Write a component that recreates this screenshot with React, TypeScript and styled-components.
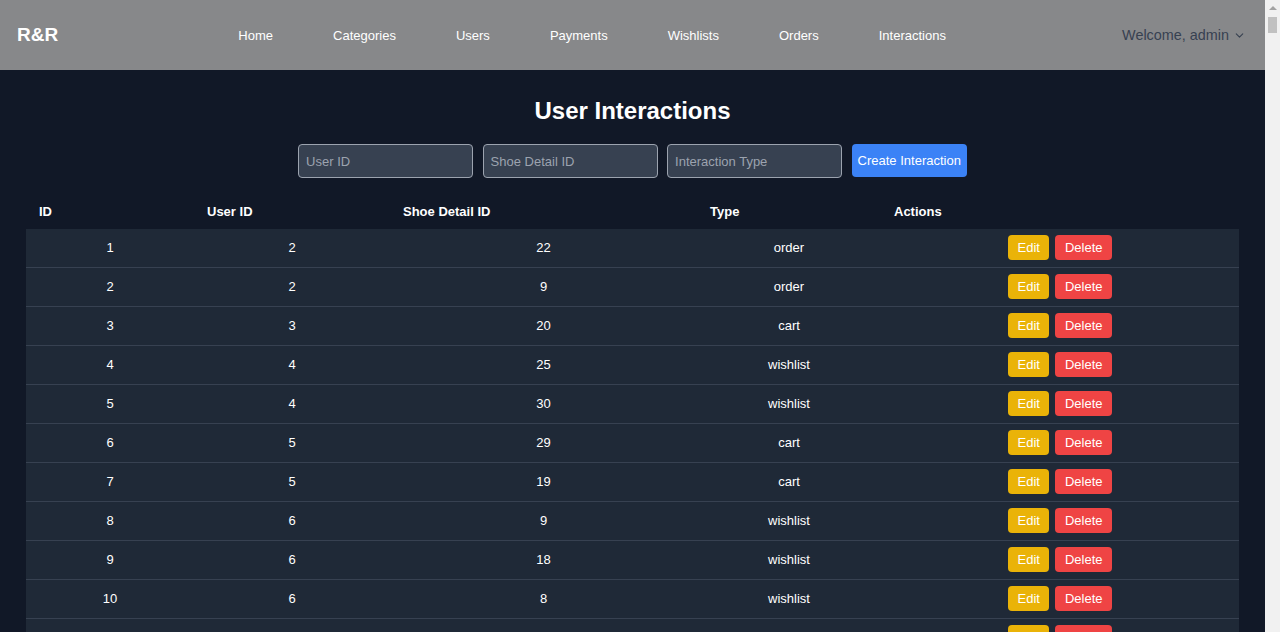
import React from "react";
import styled, { createGlobalStyle } from "styled-components";
import { ChevronDown } from "lucide-react";

type InteractionProps = {
  id: number;
  user_id: number;
  shoe_detail_id: number;
  type: string;
};

const data: InteractionProps[] = [
  { id: 1, user_id: 2, shoe_detail_id: 22, type: "order" },
  { id: 2, user_id: 2, shoe_detail_id: 9, type: "order" },
  { id: 3, user_id: 3, shoe_detail_id: 20, type: "cart" },
  { id: 4, user_id: 4, shoe_detail_id: 25, type: "wishlist" },
  { id: 5, user_id: 4, shoe_detail_id: 30, type: "wishlist" },
  { id: 6, user_id: 5, shoe_detail_id: 29, type: "cart" },
  { id: 7, user_id: 5, shoe_detail_id: 19, type: "cart" },
  { id: 8, user_id: 6, shoe_detail_id: 9, type: "wishlist" },
  { id: 9, user_id: 6, shoe_detail_id: 18, type: "wishlist" },
  { id: 10, user_id: 6, shoe_detail_id: 8, type: "wishlist" },
  { id: 11, user_id: 7, shoe_detail_id: 14, type: "order" },
  { id: 12, user_id: 7, shoe_detail_id: 3, type: "cart" },
  { id: 13, user_id: 8, shoe_detail_id: 27, type: "wishlist" },
  { id: 14, user_id: 8, shoe_detail_id: 11, type: "order" },
];

const NAV_LINKS = [
  "Home",
  "Categories",
  "Users",
  "Payments",
  "Wishlists",
  "Orders",
  "Interactions",
];

const GlobalStyle = createGlobalStyle`
  body {
    margin: 0;
    background: #111827;
    font-family: "Liberation Sans", Arial, sans-serif;
    color: #ffffff;
  }
`;

const Page = styled.div`
  margin-right: 15px;
`;

// stand-in for the browser scrollbar shown in the screenshot
const ScrollTrack = styled.div`
  position: fixed;
  top: 0;
  right: 0;
  bottom: 0;
  width: 15px;
  background: #f1f1f1;
  display: flex;
  flex-direction: column;
  align-items: center;
`;

const ScrollArrow = styled.div`
  width: 0;
  height: 0;
  margin: 6px 0 4px;
  border-left: 4px solid transparent;
  border-right: 4px solid transparent;
  border-bottom: 4px solid #a3a3a3;
`;

const ScrollThumb = styled.div`
  width: 9px;
  height: 16px;
  background: #c1c1c1;
  margin-top: 3px;
`;

const Header = styled.header`
  height: 70px;
  background: #87888a;
  display: flex;
  align-items: center;
  justify-content: space-between;
  padding: 0 19px 0 17px;
`;

const Logo = styled.div`
  font-size: 19px;
  font-weight: bold;
  color: #ffffff;
`;

const Nav = styled.nav`
  display: flex;
  gap: 60px;
  margin-left: 4px;
`;

const NavLink = styled.a`
  font-size: 13px;
  color: #ffffff;
  text-decoration: none;
  cursor: pointer;
`;

const Welcome = styled.div`
  display: flex;
  align-items: center;
  gap: 4px;
  font-size: 14.4px;
  color: #374151;
`;

const Main = styled.main`
  padding: 26px 26px 0;
`;

const Title = styled.h1`
  margin: 0;
  font-size: 24px;
  line-height: 29px;
  font-weight: bold;
  text-align: center;
`;

const Form = styled.div`
  display: flex;
  justify-content: center;
  gap: 9.5px;
  margin-top: 19px;
`;

const Input = styled.input`
  width: 175px;
  height: 34px;
  box-sizing: border-box;
  background: #374151;
  border: 1px solid #9ca3af;
  border-radius: 4px;
  padding: 0 7px;
  font-family: inherit;
  font-size: 13px;
  color: #ffffff;
  outline: none;

  &::placeholder {
    color: #9ca3af;
  }
`;

const CreateButton = styled.button`
  height: 33px;
  padding: 0 6px;
  background: #3b82f6;
  border: none;
  border-radius: 4px;
  color: #ffffff;
  font-family: inherit;
  font-size: 13px;
  cursor: pointer;
`;

const Table = styled.table`
  width: 100%;
  margin-top: 16px;
  border-collapse: collapse;
  table-layout: fixed;
  font-size: 13px;
`;

const Th = styled.th<{ $width: number }>`
  width: ${(p) => p.$width}px;
  box-sizing: border-box;
  text-align: left;
  font-weight: bold;
  padding: 8.5px 13px 9.5px;
  line-height: 17px;
`;

const Tr = styled.tr`
  background: #1f2937;
  border-bottom: 1px solid #374151;
`;

const Td = styled.td`
  text-align: center;
  padding: 6px 9px 7px;
  line-height: 17px;
`;

const ActionButton = styled.button<{ $variant: "edit" | "delete" }>`
  background: ${(p) => (p.$variant === "edit" ? "#eab308" : "#ef4444")};
  border: none;
  border-radius: 4px;
  color: #ffffff;
  font-family: inherit;
  font-size: 13px;
  line-height: 17px;
  padding: 4px 9.5px;
  margin: 0 3px;
  cursor: pointer;
`;

const COLUMNS = [
  { label: "ID", width: 168 },
  { label: "User ID", width: 196 },
  { label: "Shoe Detail ID", width: 307 },
  { label: "Type", width: 184 },
  { label: "Actions", width: 358 },
];

function App() {
  const [interactions] = React.useState<InteractionProps[]>(data);

  return (
    <>
      <GlobalStyle />
      <Page>
        <Header>
          <Logo>R&amp;R</Logo>
          <Nav>
            {NAV_LINKS.map((link) => (
              <NavLink key={link}>{link}</NavLink>
            ))}
          </Nav>
          <Welcome>
            Welcome, admin
            <ChevronDown size={13} strokeWidth={2} />
          </Welcome>
        </Header>
        <Main>
          <Title>User Interactions</Title>
          <Form>
            <Input placeholder="User ID" />
            <Input placeholder="Shoe Detail ID" />
            <Input placeholder="Interaction Type" />
            <CreateButton>Create Interaction</CreateButton>
          </Form>
          <Table>
            <thead>
              <tr>
                {COLUMNS.map((col) => (
                  <Th key={col.label} $width={col.width}>
                    {col.label}
                  </Th>
                ))}
              </tr>
            </thead>
            <tbody>
              {interactions.map((item) => (
                <Tr key={item.id}>
                  <Td>{item.id}</Td>
                  <Td>{item.user_id}</Td>
                  <Td>{item.shoe_detail_id}</Td>
                  <Td>{item.type}</Td>
                  <Td>
                    <ActionButton $variant="edit">Edit</ActionButton>
                    <ActionButton $variant="delete">Delete</ActionButton>
                  </Td>
                </Tr>
              ))}
            </tbody>
          </Table>
        </Main>
      </Page>
      <ScrollTrack>
        <ScrollArrow />
        <ScrollThumb />
      </ScrollTrack>
    </>
  );
}

export default App;
